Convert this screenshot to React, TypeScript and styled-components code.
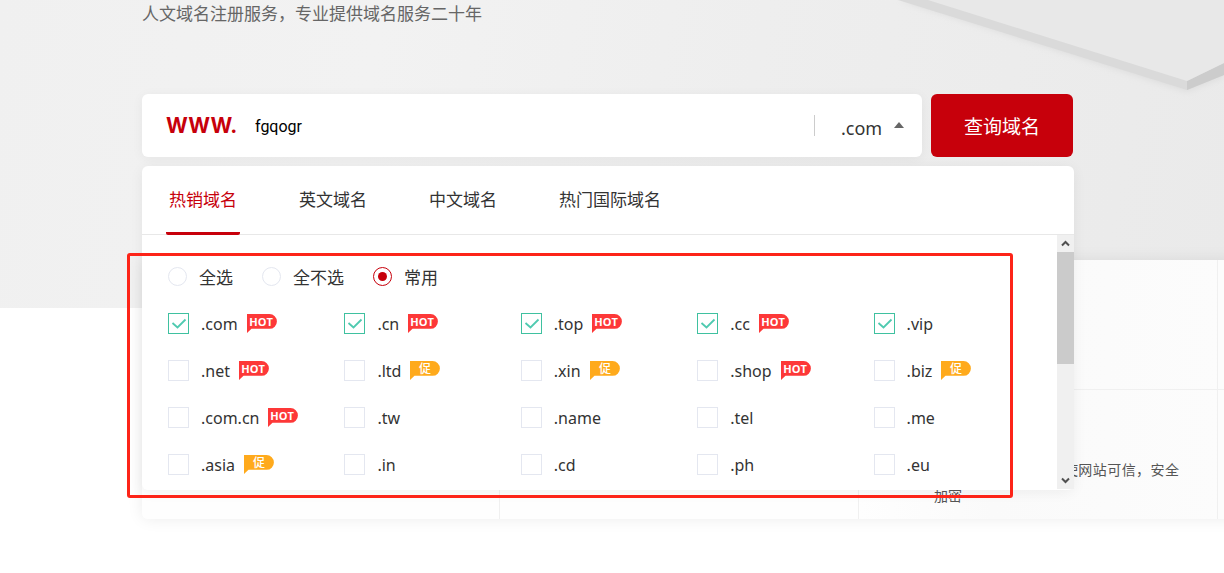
import React, { useState } from "react";
import styled, { createGlobalStyle } from "styled-components";

const sans = `"Noto Sans", "Noto Sans CJK SC", sans-serif`;
const cjk = `"Noto Sans CJK SC", "Noto Sans", sans-serif`;
const red = "#c7000b";
const green = "#3fc1a0";

const GlobalStyle = createGlobalStyle`
  *, *::before, *::after { box-sizing: border-box; }
  body { margin: 0; background: #fff; color: #333; font-family: ${sans}; }
  button, input, select { font: inherit; color: inherit; margin: 0; padding: 0; border: 0; background: none; }
  p { margin: 0; }
`;

const Page = styled.main`
  position: relative;
  overflow: hidden;
  padding-bottom: 54px;
`;

const Hero = styled.section`
  position: relative;
  padding: 0 151px 151px 142px;
  background: linear-gradient(100deg, #f0f0f0 0%, #f2f2f2 30%, #eeeeee 60%, #eaeaea 100%);
`;

const HeroArt = styled.svg`
  position: absolute;
  top: 0;
  right: 0;
`;

const Slogan = styled.p`
  position: relative;
  padding: 1px 0 69px;
  color: #666;
  font: 400 17px/24px ${cjk};
`;

const SearchForm = styled.form`
  position: relative;
  z-index: 2;
  display: flex;
  gap: 9px;
`;

const SearchBox = styled.div`
  flex: 1;
  display: flex;
  align-items: center;
  height: 63px;
  padding: 0 18px 0 24px;
  border-radius: 6px;
  background: #fff;
  box-shadow: 0 2px 12px rgba(0, 0, 0, 0.05);
`;

const Prefix = styled.label`
  width: 89px;
  color: ${red};
  font: 700 21px/30px Inter, sans-serif;
`;

const DomainInput = styled.input`
  flex: 1;
  min-width: 0;
  height: 40px;
  padding-top: 2px;
  outline: 0;
  color: #000;
  font-family: Roboto, sans-serif;
  font-size: 16px;
`;

const Divider = styled.span`
  width: 1px;
  height: 21px;
  margin-right: 26px;
  background: #ccc;
`;

const Suffix = styled.span`
  display: flex;
  align-items: center;
  gap: 10px;
`;

const SuffixSelect = styled.select`
  appearance: none;
  width: 43px;
  padding-top: 4px;
  outline: 0;
  font-size: 18px;
  line-height: 28px;
`;

const SubmitButton = styled.button`
  width: 142px;
  height: 63px;
  border-radius: 6px;
  background: ${red};
  color: #fff;
  font: 400 19px/28px ${cjk};
  cursor: pointer;
`;

const Panel = styled.div`
  position: absolute;
  top: calc(100% + 9px);
  left: 0;
  right: -1px;
  border-radius: 6px;
  background: #fff;
  box-shadow: 0 2px 14px rgba(0, 0, 0, 0.06);
`;

const Tabs = styled.div`
  display: flex;
  gap: 56px;
  padding: 0 24px;
  border-bottom: 1px solid #e8e8e8;
`;

const Tab = styled.button<{ $active: boolean }>`
  height: 69px;
  margin-bottom: -1px;
  padding: 0 3px;
  border-bottom: 3px solid ${(p) => (p.$active ? red : "transparent")};
  border-radius: 2px;
  color: ${(p) => (p.$active ? red : "#333")};
  font: 400 17px/24px ${cjk};
  cursor: pointer;
`;

const PanelBody = styled.div`
  display: flex;
  height: 255px;
`;

const Options = styled.div`
  flex: 1;
  overflow: hidden;
  padding: 18px 7px 0 26px;
`;

const RadioRow = styled.fieldset`
  display: flex;
  align-items: center;
  gap: 29px;
  height: 47px;
  margin: 0;
  padding: 0;
  border: 0;
`;

const RadioLabel = styled.label`
  display: flex;
  align-items: center;
  gap: 12px;
  font: 400 17px/24px ${cjk};
`;

const Radio = styled.input`
  appearance: none;
  display: grid;
  place-items: center;
  width: 19px;
  height: 19px;
  border: 1px solid #e4e7f0;
  border-radius: 50%;
  &:checked { border-color: ${red}; }
  &:checked::after {
    content: "";
    width: 9px;
    height: 9px;
    border-radius: 50%;
    background: ${red};
  }
`;

const SuffixGrid = styled.div`
  display: grid;
  grid-template-columns: repeat(5, 1fr);
  grid-auto-rows: 47px;
`;

const SuffixItem = styled.label`
  display: flex;
  align-items: center;
  font-size: 16px;
  line-height: 24px;
`;

const CheckBoxWrap = styled.span`
  position: relative;
  display: flex;
  margin-right: 12px;
`;

const CheckBox = styled.input`
  appearance: none;
  width: 21px;
  height: 21px;
  border: 1px solid #e4e7f0;
  &:checked { border-color: ${green}; }
  & + svg { display: none; }
  &:checked + svg { display: block; }
`;

const CheckMark = styled.svg`
  position: absolute;
  top: 0;
  left: 0;
  pointer-events: none;
`;

const BadgeArt = styled.svg`
  margin-left: 9px;
  overflow: visible;
`;

const ScrollTrack = styled.div`
  display: flex;
  flex-direction: column;
  width: 17px;
  height: 254px;
  background: #f0f0f0;
`;

const ScrollArrow = styled.button`
  display: grid;
  place-items: center;
  width: 17px;
  height: 17px;
`;

const ScrollRail = styled.div`
  flex: 1;
`;

const ScrollThumb = styled.div`
  height: 112px;
  background: #cbcbcb;
`;

const Services = styled.section`
  position: relative;
  display: grid;
  grid-template-columns: 358px 359px 359px 359px;
  grid-template-rows: 130px 129px;
  width: max-content;
  margin: -48px 0 0 142px;
  border-radius: 6px;
  background: linear-gradient(90deg, #fefefe 0, #fefefe 716px, #fafafa 850px, #fcfcfc 1080px);
  box-shadow: 0 0 16px rgba(0, 0, 0, 0.08);
`;

const ServiceCell = styled.div<{ $top?: boolean }>`
  padding: 66px 38px 0 75px;
  border-right: 1px solid #f0f0f0;
  border-bottom: ${(p) => (p.$top ? "1px solid #f0f0f0" : "0")};
`;

const ServiceText = styled.p`
  color: #555;
  font: 400 14px/26px ${cjk};
  text-align: justify;
`;

const Highlight = styled.div`
  position: absolute;
  z-index: 3;
  top: 253px;
  left: 127px;
  right: 211px;
  height: 245px;
  border: 3px solid #fd2418;
  border-radius: 3px;
  pointer-events: none;
`;

type BadgeKind = "HOT" | "促";

const Badge = ({ kind }: { kind: BadgeKind }) => (
  <BadgeArt width="30" height="19" viewBox="0 0 30 19">
    <path
      d="M0 0H22.5A7.4 7.4 0 0 1 22.5 14.8H4.5L0 19Z"
      fill={kind === "HOT" ? "#fd3838" : "#ffaa1c"}
    />
    <text
      x={kind === "HOT" ? 14 : 15}
      y={12}
      textAnchor="middle"
      fill="#fff"
      fontFamily={kind === "HOT" ? '"Open Sans", sans-serif' : '"Noto Sans CJK SC", sans-serif'}
      fontWeight={kind === "HOT" ? 700 : 500}
      fontSize={kind === "HOT" ? 11 : 12}
    >
      {kind}
    </text>
  </BadgeArt>
);

const suffixes: { name: string; badge?: BadgeKind; on?: boolean }[] = [
  { name: ".com", badge: "HOT", on: true },
  { name: ".cn", badge: "HOT", on: true },
  { name: ".top", badge: "HOT", on: true },
  { name: ".cc", badge: "HOT", on: true },
  { name: ".vip", on: true },
  { name: ".net", badge: "HOT" },
  { name: ".ltd", badge: "促" },
  { name: ".xin", badge: "促" },
  { name: ".shop", badge: "HOT" },
  { name: ".biz", badge: "促" },
  { name: ".com.cn", badge: "HOT" },
  { name: ".tw" },
  { name: ".name" },
  { name: ".tel" },
  { name: ".me" },
  { name: ".asia", badge: "促" },
  { name: ".in" },
  { name: ".cd" },
  { name: ".ph" },
  { name: ".eu" },
];

const tabNames = ["热销域名", "英文域名", "中文域名", "热门国际域名"];
const modes = ["全选", "全不选", "常用"];

export default function App() {
  const [tab, setTab] = useState(0);
  return (
    <Page>
      <GlobalStyle />
      <Hero>
        <HeroArt width="364" height="140" viewBox="0 0 364 140" aria-hidden="true">
          <defs>
            <filter id="soft" x="-10%" y="-10%" width="120%" height="130%">
              <feGaussianBlur stdDeviation="3" />
            </filter>
          </defs>
          <path d="M38 0L327 92L364 77V0Z" fill="#dedede" filter="url(#soft)" />
          <path d="M38 0L327 90L364 75V0Z" fill="#dadada" />
          <path d="M327 81L364 63V75L327 90Z" fill="#cccccc" />
          <path d="M68 0L327 81L364 63V0Z" fill="#e8e8e8" />
        </HeroArt>
        <Slogan>人文域名注册服务，专业提供域名服务二十年</Slogan>
        <SearchForm onSubmit={(e) => e.preventDefault()}>
          <SearchBox>
            <Prefix htmlFor="domain">WWW.</Prefix>
            <DomainInput id="domain" defaultValue="fgqogr" />
            <Divider />
            <Suffix>
              <SuffixSelect aria-label="域名后缀" defaultValue=".com">
                <option>.com</option>
              </SuffixSelect>
              <svg width="10" height="12" viewBox="0 0 10 12" aria-hidden="true">
                <path d="M5 2L10 8H0Z" fill="#666" />
              </svg>
            </Suffix>
          </SearchBox>
          <SubmitButton type="submit">查询域名</SubmitButton>
          <Panel>
            <Tabs role="tablist">
              {tabNames.map((name, i) => (
                <Tab
                  key={name}
                  type="button"
                  role="tab"
                  aria-selected={i === tab}
                  $active={i === tab}
                  onClick={() => setTab(i)}
                >
                  {name}
                </Tab>
              ))}
            </Tabs>
            <PanelBody>
              <Options>
                <RadioRow>
                  {modes.map((mode) => (
                    <RadioLabel key={mode}>
                      <Radio type="radio" name="mode" defaultChecked={mode === "常用"} />
                      {mode}
                    </RadioLabel>
                  ))}
                </RadioRow>
                <SuffixGrid>
                  {suffixes.map((s) => (
                    <SuffixItem key={s.name}>
                      <CheckBoxWrap>
                        <CheckBox type="checkbox" defaultChecked={s.on} />
                        <CheckMark width="21" height="21" viewBox="0 0 21 21">
                          <path
                            d="M4.5 10L9.5 14.5L17.5 6.5"
                            fill="none"
                            stroke="#4fcab0"
                            strokeWidth="1.8"
                          />
                        </CheckMark>
                      </CheckBoxWrap>
                      {s.name}
                      {s.badge && <Badge kind={s.badge} />}
                    </SuffixItem>
                  ))}
                </SuffixGrid>
              </Options>
              <ScrollTrack>
                <ScrollArrow type="button" aria-label="向上滚动">
                  <svg width="9" height="7" viewBox="0 0 9 7">
                    <path d="M1 5.5L4.5 2L8 5.5" fill="none" stroke="#505050" strokeWidth="2" />
                  </svg>
                </ScrollArrow>
                <ScrollRail>
                  <ScrollThumb />
                </ScrollRail>
                <ScrollArrow type="button" aria-label="向下滚动">
                  <svg width="9" height="7" viewBox="0 0 9 7">
                    <path d="M1 1.5L4.5 5L8 1.5" fill="none" stroke="#505050" strokeWidth="2" />
                  </svg>
                </ScrollArrow>
              </ScrollTrack>
            </PanelBody>
          </Panel>
        </SearchForm>
      </Hero>
      <Services>
        <ServiceCell $top />
        <ServiceCell $top />
        <ServiceCell $top />
        <ServiceCell $top />
        <ServiceCell />
        <ServiceCell />
        <ServiceCell>
          <ServiceText>采用国际标准证书，使网站可信，安全加密</ServiceText>
        </ServiceCell>
        <ServiceCell />
      </Services>
      <Highlight />
    </Page>
  );
}
